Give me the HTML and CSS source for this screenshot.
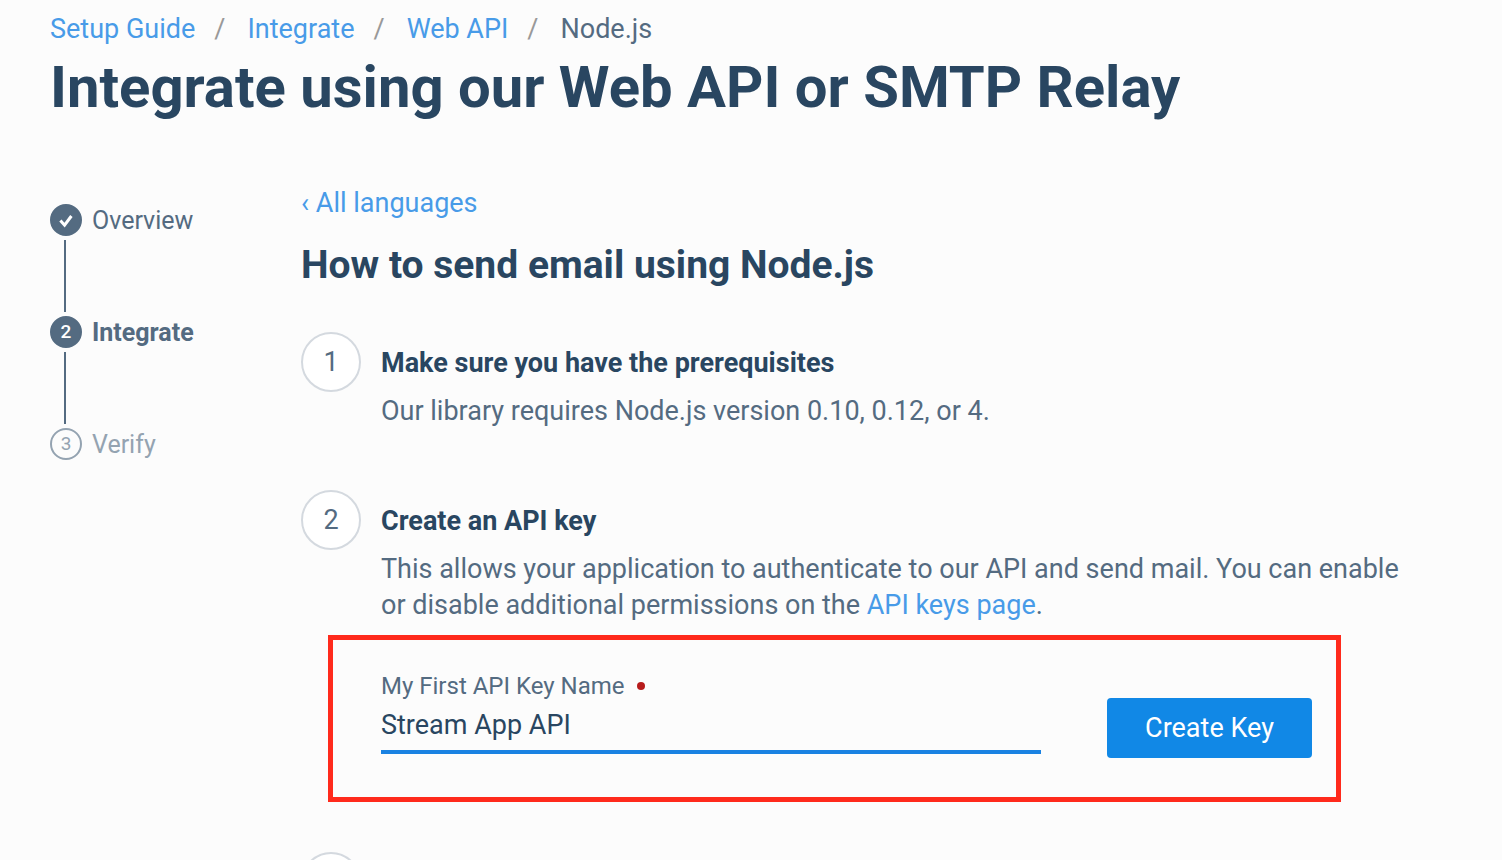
FILE: index.html
```html
<!DOCTYPE html>
<html lang="en">
<head>
<meta charset="utf-8">
<meta name="viewport" content="width=device-width, initial-scale=1">
<title>Integrate using our Web API or SMTP Relay</title>
<link rel="stylesheet" href="styles.css">
</head>
<body>
<div class="page">
  <header>
    <nav aria-label="Breadcrumb">
      <ol class="breadcrumb">
        <li><a href="#">Setup Guide</a></li>
        <li><a href="#">Integrate</a></li>
        <li><a href="#">Web API</a></li>
        <li aria-current="page">Node.js</li>
      </ol>
    </nav>
    <h1 class="page-title">Integrate using our Web API or SMTP Relay</h1>
  </header>
  <div class="layout">
    <ol class="progress">
      <li class="progress-item">
        <span class="progress-dot"><svg width="16" height="16" viewBox="0 0 16 16" fill="none" stroke="currentColor" stroke-width="3" aria-hidden="true"><path d="M2.4 8.4 6.6 13.2 13.4 4"/></svg></span>
        <span>Overview</span>
      </li>
      <li class="progress-item current">
        <span class="progress-dot">2</span>
        <span>Integrate</span>
      </li>
      <li class="progress-item pending">
        <span class="progress-dot">3</span>
        <span>Verify</span>
      </li>
    </ol>
    <main>
      <a class="back" href="#">‹ All languages</a>
      <h2 class="guide-title">How to send email using Node.js</h2>
      <ol class="steps">
        <li class="step">
          <span class="step-number">1</span>
          <div class="step-body">
            <h3 class="step-title">Make sure you have the prerequisites</h3>
            <p class="step-text">Our library requires Node.js version 0.10, 0.12, or 4.</p>
          </div>
        </li>
        <li class="step">
          <span class="step-number">2</span>
          <div class="step-body">
            <h3 class="step-title">Create an API key</h3>
            <p class="step-text">This allows your application to authenticate to our API and send mail. You can enable or disable additional permissions on the <a href="#">API keys page</a>.</p>
            <form class="key-form">
              <div class="field">
                <label class="field-label" for="key-name">My First API Key Name<span class="required"></span></label>
                <input class="field-input" id="key-name" type="text" value="Stream App API" required>
              </div>
              <button class="button" type="button">Create Key</button>
            </form>
          </div>
        </li>
        <li class="step">
          <span class="step-number"></span>
        </li>
      </ol>
    </main>
  </div>
</div>
</body>
</html>
```
FILE: styles.css
```css
* { box-sizing: border-box; }

body {
  margin: 0;
  background: #fcfcfc;
  color: #546b81;
  font: 27px/36px Roboto, "Liberation Sans", sans-serif;
}

h1, h2, h3, p, ol { margin: 0; padding: 0; }
ol { list-style: none; }
a { color: #489be8; text-decoration: none; }

.page {
  height: 100vh;
  padding: 11px 50px 0;
  overflow-y: auto;
  scrollbar-width: none;
}

.breadcrumb { display: flex; }
.breadcrumb li + li::before {
  content: "/";
  margin: 0 22px 0 19px;
  color: #999;
}

.page-title {
  margin-top: 4px;
  color: #294661;
  font-size: 58px;
  line-height: 72px;
  font-weight: 700;
}

.layout {
  display: grid;
  grid-template-columns: 251px 1fr;
  margin-top: 62px;
}

.progress {
  display: flex;
  flex-direction: column;
  gap: 78px;
  padding-top: 19px;
  font-size: 25px;
  line-height: 34px;
}
.progress-item {
  position: relative;
  display: flex;
  gap: 10px;
}
.progress-dot {
  display: flex;
  align-items: center;
  justify-content: center;
  width: 32px;
  height: 32px;
  border: 2px solid #546b81;
  border-radius: 50%;
  background: #546b81;
  color: #fff;
  font-size: 19px;
  font-weight: 400;
}
.progress-item:not(:last-child)::after {
  content: "";
  position: absolute;
  top: 36px;
  left: 14px;
  width: 2px;
  height: 72px;
  background: #546b81;
}
.current { font-weight: 700; }
.current .progress-dot { font-weight: 500; }
.pending { color: #94a3b1; }
.pending .progress-dot {
  border-color: #94a3b1;
  background: none;
  color: #94a3b1;
}

.guide-title {
  margin-top: 19px;
  color: #294661;
  font-size: 39px;
  line-height: 50px;
  font-weight: 700;
}

.steps {
  display: flex;
  flex-direction: column;
  gap: 50px;
  margin-top: 42px;
}
.step {
  display: grid;
  grid-template-columns: 60px 1fr;
  gap: 20px;
}
.step-number {
  display: flex;
  align-items: center;
  justify-content: center;
  width: 60px;
  height: 60px;
  border: 2px solid #d4d9df;
  border-radius: 50%;
  background: #fff;
}
.step-body { padding: 13px 0 11px; }
.step-title {
  color: #294661;
  font-size: 27px;
  line-height: 36px;
  font-weight: 700;
}
.step-text {
  margin-top: 12px;
  padding-right: 36px;
}

.key-form {
  display: flex;
  align-items: center;
  gap: 66px;
  margin: 12px 111px -11px -53px;
  padding: 28px 24px 43px 48px;
  border: 5px solid #ff2a1c;
}
.field { flex: 1; }
.field-label {
  display: flex;
  align-items: center;
  gap: 12px;
  font-size: 24px;
  line-height: 36px;
}
.required {
  width: 8px;
  height: 8px;
  border-radius: 50%;
  background: #b71c1c;
}
.field-input {
  display: block;
  width: 100%;
  height: 50px;
  padding: 0 0 4px;
  border: 0;
  border-bottom: 4px solid #1a82e2;
  outline: 0;
  background: none;
  color: #294661;
  font: inherit;
}
.button {
  align-self: flex-end;
  width: 205px;
  height: 60px;
  margin-bottom: -4px;
  border: 0;
  border-radius: 4px;
  background: #1188e6;
  color: #fff;
  font: inherit;
}
```
